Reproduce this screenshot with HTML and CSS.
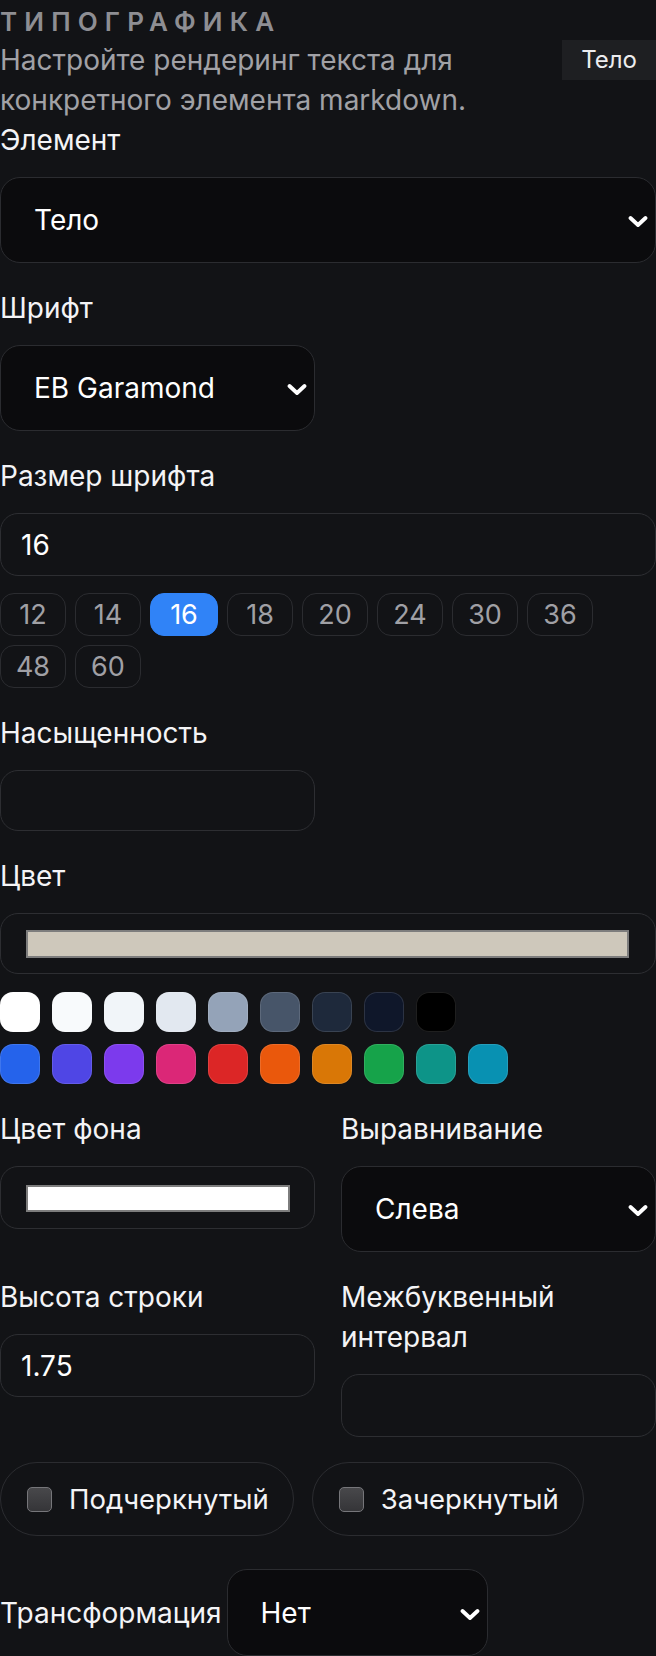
FILE: index.html
```html
<!DOCTYPE html>
<html lang="ru">
<head>
<meta charset="utf-8">
<title>Типографика</title>
<link rel="stylesheet" href="styles.css">
</head>
<body>
<div class="panel">
  <header class="head">
    <div class="head-text">
      <h2 class="eyebrow">Типографика</h2>
      <p class="desc">Настройте рендеринг текста для конкретного элемента markdown.</p>
    </div>
    <span class="badge">Тело</span>
  </header>

  <div class="form">
    <div class="field span2">
      <label class="label">Элемент</label>
      <div class="select-wrap">
        <select class="select"><option>Тело</option></select>
        <svg class="chev" viewBox="0 0 20 12"><path d="M2.5 2.5 L10 9.5 L17.5 2.5" /></svg>
      </div>
    </div>

    <div class="field">
      <label class="label">Шрифт</label>
      <div class="select-wrap">
        <select class="select"><option>EB Garamond</option></select>
        <svg class="chev" viewBox="0 0 20 12"><path d="M2.5 2.5 L10 9.5 L17.5 2.5" /></svg>
      </div>
    </div>

    <div class="field span2">
      <label class="label">Размер шрифта</label>
      <input class="input" type="text" value="16">
      <div class="chips">
        <button class="chip">12</button>
        <button class="chip">14</button>
        <button class="chip active">16</button>
        <button class="chip">18</button>
        <button class="chip">20</button>
        <button class="chip">24</button>
        <button class="chip">30</button>
        <button class="chip">36</button>
        <button class="chip">48</button>
        <button class="chip">60</button>
      </div>
    </div>

    <div class="field">
      <label class="label">Насыщенность</label>
      <input class="input short" type="text" value="">
    </div>

    <div class="field span2">
      <label class="label">Цвет</label>
      <div class="color-input"><span class="color-bar beige"></span></div>
      <div class="swatches">
        <div class="swatch-row">
          <span class="sw" style="background:#ffffff"></span>
          <span class="sw" style="background:#f8fafc"></span>
          <span class="sw" style="background:#f1f5f9"></span>
          <span class="sw" style="background:#e2e8f0"></span>
          <span class="sw" style="background:#94a3b8"></span>
          <span class="sw" style="background:#475569"></span>
          <span class="sw" style="background:#1e293b"></span>
          <span class="sw" style="background:#0f172a"></span>
          <span class="sw" style="background:#000000"></span>
        </div>
        <div class="swatch-row">
          <span class="sw" style="background:#2563eb"></span>
          <span class="sw" style="background:#4f46e5"></span>
          <span class="sw" style="background:#7c3aed"></span>
          <span class="sw" style="background:#db2777"></span>
          <span class="sw" style="background:#dc2626"></span>
          <span class="sw" style="background:#ea580c"></span>
          <span class="sw" style="background:#d97706"></span>
          <span class="sw" style="background:#16a34a"></span>
          <span class="sw" style="background:#0d9488"></span>
          <span class="sw" style="background:#0891b2"></span>
        </div>
      </div>
    </div>

    <div class="field">
      <label class="label">Цвет фона</label>
      <div class="color-input tall"><span class="color-bar white"></span></div>
    </div>
    <div class="field">
      <label class="label">Выравнивание</label>
      <div class="select-wrap">
        <select class="select"><option>Слева</option></select>
        <svg class="chev" viewBox="0 0 20 12"><path d="M2.5 2.5 L10 9.5 L17.5 2.5" /></svg>
      </div>
    </div>

    <div class="field">
      <label class="label">Высота строки</label>
      <input class="input" type="text" value="1.75">
    </div>
    <div class="field">
      <label class="label">Межбуквенный интервал</label>
      <input class="input" type="text" value="">
    </div>

    <div class="checks span2">
      <label class="pill"><span class="box"></span><span>Подчеркнутый</span></label>
      <label class="pill"><span class="box"></span><span>Зачеркнутый</span></label>
    </div>

    <div class="inline-field span2">
      <span class="inline-label">Трансформация</span>
      <div class="select-wrap narrow">
        <select class="select"><option>Нет</option></select>
        <svg class="chev" viewBox="0 0 20 12"><path d="M2.5 2.5 L10 9.5 L17.5 2.5" /></svg>
      </div>
    </div>
  </div>
</div>
</body>
</html>
```

FILE: styles.css
```css
* { box-sizing: border-box; }

html, body {
  margin: 0;
  padding: 0;
  background: #121316;
}

body {
  font-family: Inter, "Noto Sans", "Liberation Sans", sans-serif;
  color: #f4f4f6;
}

.panel {
  width: 656px;
}

.head {
  display: flex;
  align-items: center;
  justify-content: space-between;
  gap: 16px;
}

.head-text {
  flex: 1;
  min-width: 0;
}

.eyebrow {
  margin: 0;
  padding-top: 3px;
  font-size: 26px;
  line-height: 37px;
  font-weight: 600;
  letter-spacing: 0.275em;
  text-transform: uppercase;
  color: #8e8e93;
}

.desc {
  margin: 0;
  font-size: 28px;
  line-height: 40px;
  color: #a1a1a6;
  max-width: 540px;
}

.badge {
  flex: none;
  background: #1e1f22;
  color: #ececef;
  font-size: 24px;
  line-height: 40px;
  padding: 0 19px;
}

.form {
  display: grid;
  grid-template-columns: 315px 315px;
  column-gap: 26px;
  row-gap: 25px;
  align-items: start;
}

.span2 { grid-column: 1 / -1; }

.field {
  display: flex;
  flex-direction: column;
}

.label {
  font-size: 28px;
  line-height: 40px;
  color: #f4f4f6;
  margin-bottom: 17px;
}

.select-wrap {
  position: relative;
}

.select {
  -webkit-appearance: none;
  appearance: none;
  width: 100%;
  height: 86px;
  padding: 0 40px 0 33px;
  background: #0b0b0d;
  border: 1px solid #2b2c30;
  border-radius: 20px;
  color: #ffffff;
  font-family: inherit;
  font-size: 28px;
}

.chev {
  position: absolute;
  right: 8px;
  top: 50%;
  width: 20px;
  height: 13px;
  margin-top: -5px;
  fill: none;
  stroke: #ffffff;
  stroke-width: 3.8;
  stroke-linecap: round;
  stroke-linejoin: round;
}

.input {
  width: 100%;
  height: 63px;
  padding: 0 20px;
  background: transparent;
  border: 1px solid #2d2e32;
  border-radius: 18px;
  color: #ffffff;
  font-family: inherit;
  font-size: 28px;
}

.input.short { height: 61px; }

.chips {
  display: flex;
  flex-wrap: wrap;
  gap: 9px;
  margin-top: 17px;
}

.chip {
  height: 43px;
  min-width: 66px;
  padding: 0 14px;
  border: 1px solid #2b2c30;
  border-radius: 14px;
  background: transparent;
  color: #a0a0a5;
  font-family: inherit;
  font-size: 27px;
  line-height: 41px;
}

.chip.active {
  background: #3083f7;
  border-color: #3083f7;
  color: #ffffff;
  min-width: 68px;
}

.color-input {
  height: 61px;
  border: 1px solid #2d2e32;
  border-radius: 18px;
  padding: 16px 26px 0 25px;
}

.color-input.tall {
  height: 63px;
  padding-top: 18px;
  padding-right: 24px;
}

.color-bar {
  display: block;
  height: 28px;
  border: 2px solid #7d7d7d;
}

.color-input.tall .color-bar { height: 27px; }

.beige { background: #cec8bb; }
.white { background: #ffffff; }

.swatches {
  display: flex;
  flex-direction: column;
  gap: 12px;
  margin-top: 18px;
}

.swatch-row {
  display: flex;
  gap: 12px;
}

.sw {
  width: 40px;
  height: 40px;
  border-radius: 13px;
  box-shadow: inset 0 0 0 1px rgba(255, 255, 255, 0.12);
}

.checks {
  display: flex;
  gap: 18px;
}

.pill {
  display: flex;
  align-items: center;
  gap: 17px;
  height: 74px;
  padding: 0 24px 0 26px;
  border: 1px solid #2b2c30;
  border-radius: 37px;
  font-size: 27.5px;
  color: #f4f4f6;
}

.box {
  width: 25px;
  height: 25px;
  border-radius: 5px;
  border: 1.5px solid #76767a;
  background: linear-gradient(#48484b, #353538);
}

.inline-field {
  display: flex;
  align-items: center;
  gap: 5px;
  margin-top: 8px;
}

.inline-label {
  font-size: 28px;
  line-height: 40px;
  color: #f4f4f6;
}

.select-wrap.narrow {
  width: 261px;
}

.select-wrap.narrow .select {
  height: 87px;
}
```
